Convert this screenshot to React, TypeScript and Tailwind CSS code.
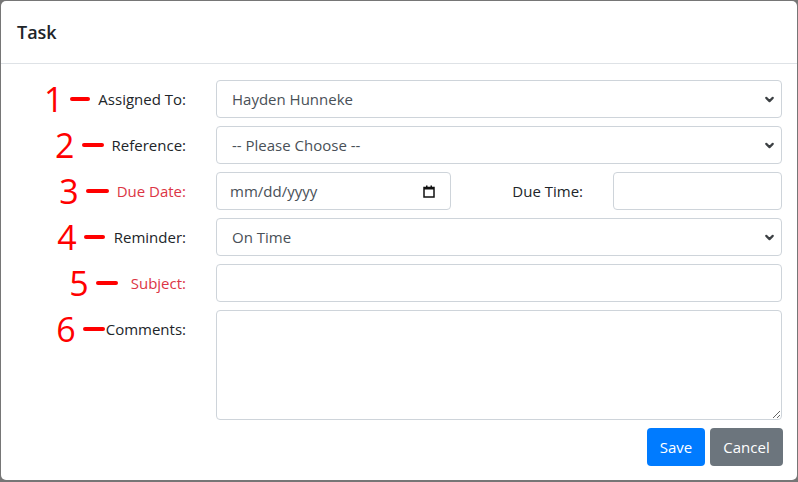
import { ChevronDown } from 'lucide-react';

type Row = {
  n: string;
  label: string;
  red?: boolean;
  dash: string;
  after: string;
};

const font = { fontFamily: '"Open Sans", "Noto Sans", Arial, sans-serif' };

// little red "n —" marker in front of each label
function Marker({ n, dash, after }: { n: string; dash: string; after: string }) {
  return (
    <div className="flex items-center">
      <span
        className="text-[34px] leading-none text-[#ff0000] [text-shadow:0_0_2px_#fff,0_0_3px_#fff]"
        style={font}
      >
        {n}
      </span>
      <span className={`ml-[7px] h-[4px] rounded-full bg-[#ff0000] ${dash} ${after}`} />
    </div>
  );
}

function FieldLabel({ row }: { row: Row }) {
  return (
    <div className="flex h-[38px] items-center justify-end">
      <Marker n={row.n} dash={row.dash} after={row.after} />
      <span className={`text-[15px] ${row.red ? 'text-[#dc3545]' : 'text-[#212529]'}`}>{row.label}</span>
    </div>
  );
}

function Select({ value }: { value: string }) {
  return (
    <div className="flex h-[38px] items-center justify-between rounded-[4px] border border-[#ced4da] bg-white pl-[15px] pr-[5px] text-[15px] text-[#495057]">
      <span>{value}</span>
      <ChevronDown size={13} strokeWidth={4} className="text-[#3c4043]" />
    </div>
  );
}

function Box({ className = '' }: { className?: string }) {
  return <div className={`h-[38px] rounded-[4px] border border-[#ced4da] bg-white ${className}`} />;
}

const rows: Row[] = [
  { n: '1', label: 'Assigned To:', dash: 'w-[20px]', after: 'mr-[8px]' },
  { n: '2', label: 'Reference:', dash: 'w-[22px]', after: 'mr-[8px]' },
  { n: '3', label: 'Due Date:', red: true, dash: 'w-[23px]', after: 'mr-[8px]' },
  { n: '4', label: 'Reminder:', dash: 'w-[21px]', after: 'mr-[9px]' },
  { n: '5', label: 'Subject:', red: true, dash: 'w-[22px]', after: 'mr-[13px]' },
  { n: '6', label: 'Comments:', dash: 'w-[22px]', after: 'mr-[1px]' },
];

export default function App() {
  return (
    <div className="h-[482px] w-[798px] bg-[#767676] pl-[1px] pt-[1px] pr-[1px] pb-[2px]" style={font}>
      <div className="flex h-full flex-col rounded-[5px] bg-white">
        {/* header */}
        <div className="border-b border-[#dee2e6] px-[16px] py-[16px]">
          <h5 className="text-[18px] font-semibold leading-[30px] text-[#212529]">Task</h5>
        </div>

        {/* body */}
        <div className="grid grid-cols-[170px_1fr] gap-x-[30px] gap-y-[8px] px-[15px] pt-[16px]">
          <FieldLabel row={rows[0]} />
          <Select value="Hayden Hunneke" />

          <FieldLabel row={rows[1]} />
          <Select value="-- Please Choose --" />

          <FieldLabel row={rows[2]} />
          <div className="grid grid-cols-[235px_1fr_169px] items-center gap-x-[30px]">
            <div className="flex h-[38px] items-center justify-between rounded-[4px] border border-[#ced4da] bg-white pl-[13px] pr-[15px] text-[15px] text-[#495057]">
              <span>mm/dd/yyyy</span>
              <svg width="12" height="13" viewBox="0 0 12 13" className="text-[#111]">
                <rect x="1" y="2.5" width="10" height="9.5" fill="none" stroke="currentColor" strokeWidth="1.5" />
                <rect x="1" y="2" width="10" height="2.5" fill="currentColor" />
                <rect x="3" y="0.5" width="1.5" height="2" fill="currentColor" />
                <rect x="7.5" y="0.5" width="1.5" height="2" fill="currentColor" />
              </svg>
            </div>
            <span className="text-right text-[15px] text-[#212529]">Due Time:</span>
            <Box />
          </div>

          <FieldLabel row={rows[3]} />
          <Select value="On Time" />

          <FieldLabel row={rows[4]} />
          <Box />

          <div className="self-start">
            <FieldLabel row={rows[5]} />
          </div>
          <textarea className="block h-[110px] w-full rounded-[4px] border border-[#ced4da] bg-white" />
        </div>

        {/* footer buttons */}
        <div className="flex justify-end gap-[5px] pr-[14px] pt-[8px]">
          <button className="h-[38px] w-[58px] rounded-[4px] bg-[#007bff] text-[15px] text-white">Save</button>
          <button className="h-[38px] w-[73px] rounded-[4px] bg-[#6c757d] text-[15px] text-white">Cancel</button>
        </div>
      </div>
    </div>
  );
}
